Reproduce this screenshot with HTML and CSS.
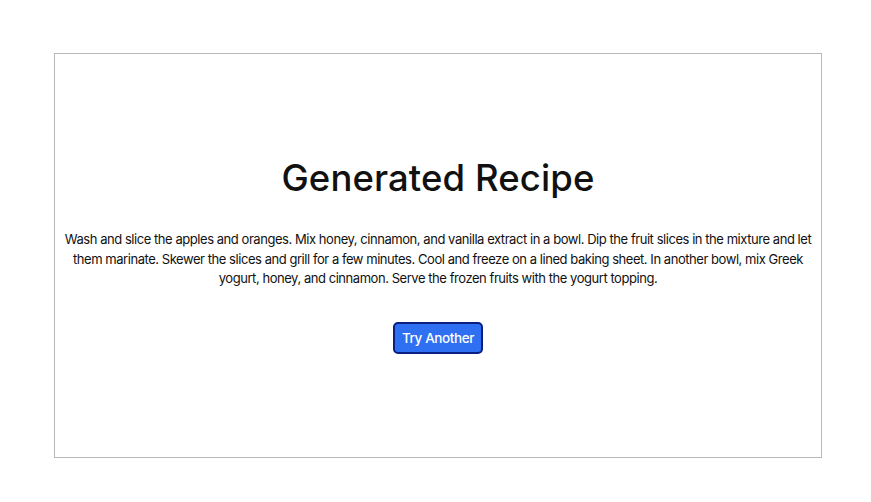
FILE: index.html
```html
<!DOCTYPE html>
<html>
<head>
<meta charset="utf-8">
<link rel="stylesheet" href="styles.css">
</head>
<body>
<div class="card">
  <h1 class="title">Generated Recipe</h1>
  <p class="recipe">Wash and slice the apples and oranges. Mix honey, cinnamon, and vanilla extract in a bowl. Dip the fruit slices in the mixture and let them marinate. Skewer the slices and grill for a few minutes. Cool and freeze on a lined baking sheet. In another bowl, mix Greek yogurt, honey, and cinnamon. Serve the frozen fruits with the yogurt topping.</p>
  <button class="btn">Try Another</button>
</div>
</body>
</html>
```
FILE: styles.css
```css
html, body {
  margin: 0;
  padding: 0;
  background: #ffffff;
}
body {
  padding: 53px 0 0 54px;
  font-family: Inter, "Noto Sans", sans-serif;
  color: #111;
}
.card {
  box-sizing: border-box;
  width: 768px;
  height: 405px;
  border: 1.5px solid #b8b8b8;
  display: flex;
  flex-direction: column;
  align-items: center;
  padding-top: 100px;
}
.title {
  margin: 0;
  font-size: 36.5px;
  font-weight: 500;
  line-height: 48px;
  letter-spacing: 0.1px;
}
.recipe {
  margin: 28px 0 0;
  padding: 0 6px;
  font-size: 13px;
  line-height: 19.5px;
  text-align: center;
  letter-spacing: -0.45px;
}
.btn {
  margin-top: 33px;
  width: 90px;
  height: 32px;
  border: 2px solid #0a1f80;
  border-radius: 5px;
  background: #2f6ff2;
  color: #fff;
  font-family: inherit;
  font-size: 13.5px;
  font-weight: 500;
  padding: 0;
  letter-spacing: -0.4px;
}
```
